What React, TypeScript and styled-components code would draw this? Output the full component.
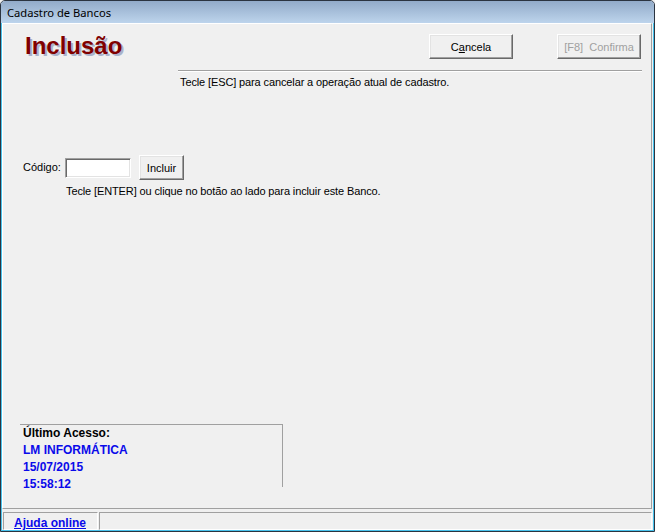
import React from "react";
import styled, { createGlobalStyle } from "styled-components";

const Global = createGlobalStyle`
  html, body { margin: 0; padding: 0; background: #f0f0f0; }
  body { font-family: "Liberation Sans", Arial, sans-serif; }
`;

const Window = styled.div`
  width: 655px;
  height: 532px;
  box-sizing: border-box;
  border: 1px solid #2b3440;
  border-radius: 5px 5px 0 0;
  display: flex;
  flex-direction: column;
  overflow: hidden;
  background: #f0f0f0;
`;

const TitleBar = styled.div`
  height: 22px;
  flex: none;
  background: linear-gradient(#92abc9, #bdd4ec);
  display: flex;
  align-items: center;
  padding-left: 6px;
  font-family: "Noto Sans", "Open Sans", sans-serif;
  font-size: 11.2px;
  color: #000;
`;

const Frame = styled.div`
  flex: 1;
  min-height: 0;
  display: flex;
  flex-direction: column;
  border: 1px solid #48c2ec;
  border-top: none;
  padding-right: 1px;
`;

const MainPanel = styled.div`
  flex: 1;
  min-height: 0;
  display: flex;
  flex-direction: column;
  border-style: solid;
  border-width: 1px;
  border-color: #ffffff #a0a0a0 #a0a0a0 #ffffff;
  padding-right: 10px;
  font-size: 11px;
  color: #000;
`;

const Header = styled.div`
  display: flex;
  align-items: flex-start;
  margin-top: 8px;
`;

const Title = styled.h1`
  margin: 0 0 0 22px;
  font: bold 24px/28px "Liberation Sans", Arial, sans-serif;
  color: #800000;
  text-shadow: 2px 2px 0 #aab3cb;
`;

const Actions = styled.div`
  margin-left: auto;
  margin-top: 2px;
  display: flex;
  gap: 44px;
`;

const Button = styled.button<{ $w: number }>`
  width: ${(p) => p.$w}px;
  height: 25px;
  box-sizing: border-box;
  padding: 0;
  background: #f0f0f0;
  border: 1px solid;
  border-color: #ffffff #696969 #696969 #ffffff;
  box-shadow: inset -1px -1px 0 #a0a0a0, inset 1px 1px 0 #e3e3e3;
  font: 11px "Liberation Sans", Arial, sans-serif;
  color: #000;
  white-space: pre;
  &:disabled {
    color: #a0a0a0;
  }
`;

const Separator = styled.div`
  margin: 10px -1px 0 175px;
  border-top: 1px solid #a0a0a0;
  border-bottom: 1px solid #ffffff;
`;

const Hint = styled.div<{ $indent: number; $top: number }>`
  margin: ${(p) => p.$top}px 0 0 ${(p) => p.$indent}px;
  font: 11px/13px "Liberation Sans", Arial, sans-serif;
  letter-spacing: -0.12px;
`;

const CodeRow = styled.div`
  display: flex;
  align-items: center;
  margin: 66px 0 0 20px;
`;

const Label = styled.label`
  width: 42px;
  font: 11px/13px "Liberation Sans", Arial, sans-serif;
`;

const Input = styled.input`
  width: 66px;
  height: 20px;
  box-sizing: border-box;
  margin: 0 8px 0 0;
  border: 1px solid;
  border-color: #a0a0a0 #ffffff #ffffff #a0a0a0;
  box-shadow: inset 1px 1px 0 #696969, inset -1px -1px 0 #e3e3e3;
  background: #fff;
  outline: none;
`;

const LastAccess = styled.div`
  margin: auto 0 21px 17px;
  width: 263px;
  height: 63px;
  box-sizing: border-box;
  border-top: 1px solid #a0a0a0;
  border-right: 1px solid #a0a0a0;
  padding-left: 3px;
  font: bold 12px/17px "Liberation Sans", Arial, sans-serif;
`;

const AccessLine = styled.div<{ $blue?: boolean }>`
  color: ${(p) => (p.$blue ? "#0a0aea" : "#000")};
  white-space: nowrap;
`;

const StatusBar = styled.div`
  flex: none;
  height: 21px;
  box-sizing: border-box;
  padding: 3px 0 0 1px;
  display: flex;
  gap: 1px;
`;

const StatusPanel = styled.div<{ $w?: number }>`
  ${(p) => (p.$w ? `width: ${p.$w}px;` : "flex: 1;")}
  height: 18px;
  box-sizing: border-box;
  border: 1px solid;
  border-color: #a0a0a0 #ffffff #ffffff #a0a0a0;
  padding-left: 10px;
`;

const HelpLink = styled.a`
  font: bold 12px/16px "Liberation Sans", Arial, sans-serif;
  color: #0a0aea;
  text-decoration: underline;
  cursor: pointer;
`;

export default function App() {
  return (
    <>
      <Global />
      <Window>
        <TitleBar>Cadastro de Bancos</TitleBar>
        <Frame>
          <MainPanel>
            <Header>
              <Title>Inclusão</Title>
              <Actions>
                <Button $w={84}>
                  C<u>a</u>ncela
                </Button>
                <Button $w={84} disabled>
                  {"[F8]  Confirma"}
                </Button>
              </Actions>
            </Header>
            <Separator />
            <Hint $indent={177} $top={4}>
              Tecle [ESC] para cancelar a operação atual de cadastro.
            </Hint>
            <CodeRow>
              <Label>Código:</Label>
              <Input />
              <Button $w={45}>Incluir</Button>
            </CodeRow>
            <Hint $indent={63} $top={5}>
              Tecle [ENTER] ou clique no botão ao lado para incluir este Banco.
            </Hint>
            <LastAccess>
              <AccessLine>Último Acesso:</AccessLine>
              <AccessLine $blue>LM INFORMÁTICA</AccessLine>
              <AccessLine $blue>15/07/2015</AccessLine>
              <AccessLine $blue>15:58:12</AccessLine>
            </LastAccess>
          </MainPanel>
          <StatusBar>
            <StatusPanel $w={95}>
              <HelpLink>Ajuda online</HelpLink>
            </StatusPanel>
            <StatusPanel />
          </StatusBar>
        </Frame>
      </Window>
    </>
  );
}
